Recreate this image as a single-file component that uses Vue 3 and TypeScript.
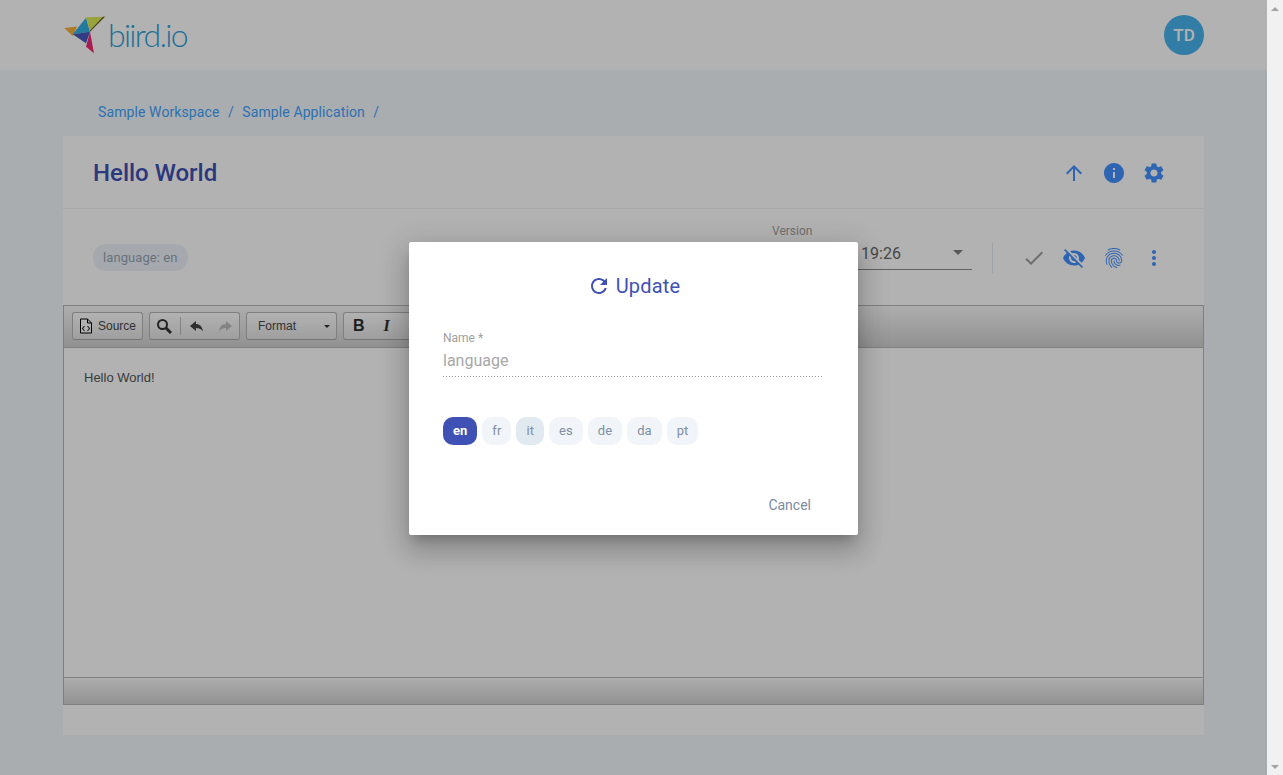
<template>
  <div class="screen">
    <div class="page">
      <header class="topbar">
        <div class="logo">
          <svg class="logo-mark" width="44" height="38" viewBox="0 0 44 38">
            <polygon points="0.3,12 13,10.500 8.700,20" fill="#f7b23b" />
            <polygon points="8.700,18.300 22,1.700 26,15.700" fill="#32b0e4" />
            <polygon points="22,1.300 41,0.700 26,15.700" fill="#dcea56" />
            <polygon points="8.700,18.300 26,15.700 22,27.300" fill="#4756ba" />
            <polygon points="26,15.700 22,30.700 30,37.300" fill="#f02a74" />
            <polygon points="41,0.700 39,0.700 25.500,15 26,15.700" fill="#6d5a3c" />
          </svg>
          <span class="logo-text">biird.io</span>
        </div>
        <div class="avatar">TD</div>
      </header>

      <nav class="crumbs">
        <a>Sample Workspace</a><span>/</span><a>Sample Application</a><span>/</span>
      </nav>

      <section class="card">
        <div class="card-head">
          <h1>Hello World</h1>
          <div class="head-actions">
            <svg viewBox="0 0 24 24"><path d="M4 12l1.41 1.41L11 7.83V20h2V7.83l5.58 5.59L20 12l-8-8-8 8z" /></svg>
            <svg viewBox="0 0 24 24"><path d="M12 2C6.48 2 2 6.48 2 12s4.48 10 10 10 10-4.48 10-10S17.52 2 12 2zm1 15h-2v-6h2v6zm0-8h-2V7h2v2z" /></svg>
            <svg viewBox="0 0 24 24"><path d="M19.14 12.94c.04-.3.06-.61.06-.94 0-.32-.02-.64-.07-.94l2.03-1.58c.18-.14.23-.41.12-.61l-1.92-3.32c-.12-.22-.37-.29-.59-.22l-2.39.96c-.5-.38-1.03-.7-1.62-.94l-.36-2.54c-.04-.24-.24-.41-.48-.41h-3.84c-.24 0-.43.17-.47.41l-.36 2.54c-.59.24-1.13.57-1.62.94l-2.39-.96c-.22-.08-.47 0-.59.22L2.74 8.87c-.12.21-.08.47.12.61l2.03 1.58c-.05.3-.09.63-.09.94s.02.64.07.94l-2.03 1.58c-.18.14-.23.41-.12.61l1.92 3.32c.12.22.37.29.59.22l2.39-.96c.5.38 1.03.7 1.62.94l.36 2.54c.05.24.24.41.48.41h3.84c.24 0 .44-.17.47-.41l.36-2.54c.59-.24 1.13-.56 1.62-.94l2.39.96c.22.08.47 0 .59-.22l1.92-3.32c.12-.22.07-.47-.12-.61l-2.01-1.58zM12 15.6c-1.98 0-3.6-1.62-3.6-3.6s1.62-3.6 3.6-3.6 3.6 1.62 3.6 3.6-1.62 3.6-3.6 3.6z" /></svg>
          </div>
        </div>

        <div class="meta-row">
          <span class="tag">language: en</span>
          <div class="version">
            <label>Version</label>
            <div class="version-select">
              <span>26/08/2019 19:26</span>
              <i class="caret"></i>
            </div>
          </div>
          <div class="meta-actions">
            <svg class="muted" viewBox="0 0 24 24"><path d="M9 16.17L4.83 12l-1.42 1.41L9 19 21 7l-1.41-1.41z" /></svg>
            <svg viewBox="0 0 24 24"><path d="M12 7c2.76 0 5 2.24 5 5 0 .65-.13 1.26-.36 1.83l2.92 2.92c1.51-1.26 2.7-2.89 3.43-4.75-1.73-4.39-6-7.5-11-7.5-1.4 0-2.74.25-3.98.7l2.16 2.16C10.74 7.13 11.35 7 12 7zM2 4.27l2.28 2.28.46.46C3.08 8.3 1.78 10.02 1 12c1.73 4.39 6 7.5 11 7.5 1.55 0 3.03-.3 4.38-.84l.42.42L19.73 22 21 20.73 3.27 3 2 4.27zM7.53 9.8l1.55 1.55c-.05.21-.08.43-.08.65 0 1.66 1.34 3 3 3 .22 0 .44-.03.65-.08l1.55 1.55c-.67.33-1.41.53-2.2.53-2.76 0-5-2.24-5-5 0-.79.2-1.53.53-2.2zm4.31-.78l3.15 3.15.02-.16c0-1.66-1.34-3-3-3l-.17.01z" /></svg>
            <svg viewBox="0 0 24 24"><path d="M17.81 4.47c-.08 0-.16-.02-.23-.06C15.66 3.42 14 3 12.01 3c-1.98 0-3.86.47-5.57 1.41-.24.13-.54.04-.68-.2-.13-.24-.04-.55.2-.68C7.82 2.52 9.86 2 12.01 2c2.13 0 3.99.47 6.03 1.52.25.13.34.43.21.67-.09.18-.26.28-.44.28zM3.5 9.72c-.1 0-.2-.03-.29-.09-.23-.16-.28-.47-.12-.7.99-1.4 2.25-2.5 3.75-3.27C9.98 4.04 14 4.03 17.15 5.65c1.5.77 2.76 1.86 3.75 3.25.16.22.11.54-.12.7-.23.16-.54.11-.7-.12-.9-1.26-2.04-2.25-3.39-2.94-2.87-1.47-6.54-1.47-9.4.01-1.36.7-2.5 1.7-3.4 2.96-.08.14-.23.21-.39.21zm6.25 12.07c-.13 0-.26-.05-.35-.15-.87-.87-1.34-1.43-2.01-2.64-.69-1.23-1.05-2.73-1.05-4.34 0-2.97 2.54-5.39 5.66-5.39s5.66 2.42 5.66 5.39c0 .28-.22.5-.5.5s-.5-.22-.5-.5c0-2.42-2.09-4.39-4.66-4.39-2.57 0-4.66 1.97-4.66 4.39 0 1.44.32 2.77.93 3.85.64 1.15 1.08 1.64 1.85 2.42.19.2.19.51 0 .71-.11.1-.24.15-.37.15zm7.17-1.85c-1.19 0-2.24-.3-3.1-.89-1.49-1.01-2.38-2.65-2.38-4.39 0-.28.22-.5.5-.5s.5.22.5.5c0 1.41.72 2.74 1.94 3.56.71.48 1.54.71 2.54.71.24 0 .64-.03 1.04-.1.27-.05.53.13.58.41.05.27-.13.53-.41.58-.57.11-1.07.12-1.21.12zM14.91 22c-.04 0-.09-.01-.13-.02-1.59-.44-2.63-1.03-3.72-2.1-1.4-1.39-2.17-3.24-2.17-5.22 0-1.62 1.38-2.94 3.08-2.94 1.7 0 3.08 1.32 3.08 2.94 0 1.07.93 1.94 2.08 1.94s2.08-.87 2.08-1.94c0-3.77-3.25-6.83-7.25-6.83-2.84 0-5.44 1.58-6.61 4.03-.39.81-.59 1.76-.59 2.8 0 .78.07 2.01.67 3.61.1.26-.03.55-.29.64-.26.1-.55-.04-.64-.29-.49-1.31-.73-2.61-.73-3.96 0-1.2.23-2.29.68-3.24 1.33-2.79 4.28-4.6 7.51-4.6 4.55 0 8.25 3.51 8.25 7.83 0 1.62-1.38 2.94-3.08 2.94s-3.08-1.32-3.08-2.94c0-1.07-.93-1.94-2.08-1.94s-2.08.87-2.08 1.94c0 1.71.66 3.31 1.87 4.51.95.94 1.86 1.46 3.27 1.85.27.07.42.35.35.61-.05.23-.26.38-.47.38z" /></svg>
            <svg viewBox="0 0 24 24"><path d="M12 8c1.1 0 2-.9 2-2s-.9-2-2-2-2 .9-2 2 .9 2 2 2zm0 2c-1.1 0-2 .9-2 2s.9 2 2 2 2-.9 2-2-.9-2-2-2zm0 6c-1.1 0-2 .9-2 2s.9 2 2 2 2-.9 2-2-.9-2-2-2z" /></svg>
          </div>
        </div>

        <div class="editor">
          <div class="ed-toolbar">
            <div class="ed-group source">
              <svg width="14" height="16" viewBox="0 0 14 16"><path d="M1.500 1h7l4 4v10h-11zM8.500 1v4h4" fill="#fff" stroke="#000" /><path d="M5.500 8L3.500 10.500l2 2.500M8.500 8l2 2.500-2 2.500" fill="none" stroke="#333" stroke-width="1.200" /></svg>
              <span>Source</span>
            </div>
            <div class="ed-group tools">
              <svg width="16" height="16" viewBox="0 0 16 16"><circle cx="6.500" cy="6.500" r="4.500" fill="none" stroke="#333" stroke-width="2" /><path d="M10 10l5 5" stroke="#333" stroke-width="3" /></svg>
              <i class="sep"></i>
              <svg width="16" height="16" viewBox="0 0 16 16"><path d="M7 3L1 8l6 5v-3c3 0 5 .8 7 3.500C13.500 9 11 6 7 6z" fill="#444" /></svg>
              <svg class="off" width="16" height="16" viewBox="0 0 16 16"><path d="M9 3l6 5-6 5v-3c-3 0-5 .8-7 3.500C2.500 9 5 6 9 6z" fill="#444" /></svg>
            </div>
            <div class="ed-group combo">
              <span>Format</span>
              <i class="combo-caret"></i>
            </div>
            <div class="ed-group styles">
              <b>B</b>
              <em>I</em>
            </div>
          </div>
          <div class="ed-body">Hello World!</div>
          <div class="ed-foot"></div>
        </div>
      </section>
    </div>

    <aside class="scrollbar">
      <i class="arrow up"></i>
      <i class="arrow down"></i>
    </aside>

    <div class="backdrop"></div>

    <div class="dialog">
      <h2>
        <svg viewBox="0 0 24 24"><path d="M17.650 6.350C16.200 4.900 14.210 4 12 4c-4.420 0-7.990 3.580-7.990 8s3.570 8 7.990 8c3.730 0 6.840-2.550 7.730-6h-2.080c-.82 2.330-3.040 4-5.650 4-3.310 0-6-2.690-6-6s2.690-6 6-6c1.660 0 3.140.69 4.220 1.780L13 11h7V4l-2.350 2.350z" /></svg>
        Update
      </h2>
      <div class="field">
        <label>Name *</label>
        <div class="field-value">language</div>
      </div>
      <div class="langs">
        <span v-for="l in langs" :key="l" class="lang" :class="{ active: l === 'en', hover: l === 'it' }">{{ l }}</span>
      </div>
      <div class="dialog-foot">
        <button>Cancel</button>
      </div>
    </div>
  </div>
</template>

<script setup lang="ts">
const langs: string[] = ['en', 'fr', 'it', 'es', 'de', 'da', 'pt']
</script>

<style>
html, body {
  margin: 0;
  overflow: hidden;
}
</style>

<style scoped>
.screen {
  display: flex;
  height: 775px;
  overflow: hidden;
  position: relative;
  font-family: Roboto, 'Liberation Sans', sans-serif;
}
.page {
  flex: 1;
  min-width: 0;
  background: #f3f8fb;
}
.scrollbar {
  width: 16px;
  background: #f1f1f1;
  position: relative;
}
.arrow {
  position: absolute;
  left: 4px;
  border-left: 4px solid transparent;
  border-right: 4px solid transparent;
}
.arrow.up {
  top: 7px;
  border-bottom: 4px solid #a3a3a3;
}
.arrow.down {
  bottom: 6px;
  border-top: 4px solid #a3a3a3;
}
.backdrop {
  position: absolute;
  top: 0;
  left: 0;
  width: 1267px;
  height: 100%;
  background: rgba(0, 0, 0, 0.3);
}
.topbar {
  height: 70px;
  background: #fff;
  padding: 0 63px 0 64px;
  display: flex;
  align-items: center;
  justify-content: space-between;
}
.logo {
  display: flex;
  align-items: center;
}
.logo-mark {
  display: block;
}
.logo-text {
  font-family: Lato, sans-serif;
  font-weight: 300;
  font-size: 32px;
  letter-spacing: -1.700px;
  line-height: 38px;
  color: #2f9fd8;
}
.avatar {
  width: 40px;
  height: 40px;
  border-radius: 50%;
  background: #47b3ec;
  color: #fff;
  font-size: 17px;
  font-weight: 500;
  display: flex;
  align-items: center;
  justify-content: center;
}
.crumbs {
  height: 84px;
  margin-bottom: -18px;
  padding: 0 0 0 98px;
  display: flex;
  align-items: center;
  gap: 8.500px;
  font-size: 14px;
  letter-spacing: 0.1px;
  color: #3fa3ff;
}
.card {
  margin: 0 63px;
  height: 599px;
  background: #fff;
}
.card-head {
  height: 73px;
  box-sizing: border-box;
  padding: 1px 38px 0 30px;
  border-bottom: 1px solid #f2f2f2;
  display: flex;
  align-items: center;
  justify-content: space-between;
}
h1 {
  margin: 0;
  font-size: 24px;
  font-weight: 500;
  color: #3f51b5;
}
.head-actions,
.meta-actions {
  display: flex;
  gap: 16px;
}
.head-actions svg,
.meta-actions svg {
  width: 24px;
  height: 24px;
  fill: #4391ff;
  display: block;
}
.meta-actions svg.muted {
  fill: #9e9e9e;
}
.meta-row {
  height: 96px;
  box-sizing: border-box;
  padding: 1px 38px 0 30px;
  display: flex;
  align-items: center;
}
.tag {
  height: 27px;
  line-height: 27px;
  padding: 0 10px;
  border-radius: 13px;
  background: #edf3f8;
  font-size: 13px;
  letter-spacing: 0.08px;
  color: #95a3b5;
}
.version {
  margin-left: auto;
  width: 200px;
  align-self: flex-start;
  margin-top: 14px;
}
.version label {
  display: block;
  font-size: 12px;
  color: #a0a0a0;
  line-height: 14px;
  margin-bottom: 6px;
}
.version-select {
  display: flex;
  align-items: center;
  justify-content: space-between;
  box-sizing: border-box;
  height: 26px;
  padding: 0 9px 6px 0;
  border-bottom: 1px solid #8c8c8c;
  font-size: 16px;
  color: #666;
}
.caret {
  border-left: 5px solid transparent;
  border-right: 5px solid transparent;
  border-top: 5px solid #808080;
  margin-top: -2px;
}
.meta-actions {
  border-left: 1px solid #e0e8ee;
  margin-left: 20px;
  padding-left: 29px;
  height: 30px;
  align-items: center;
  margin-top: 1px;
}
.editor {
  height: 400px;
  box-sizing: border-box;
  border: 1px solid #b6b6b6;
  display: flex;
  flex-direction: column;
}
.ed-toolbar {
  height: 42px;
  box-sizing: border-box;
  background: linear-gradient(#f8f8f8, #cfd1cf);
  border-bottom: 1px solid #b6b6b6;
  padding: 6px 8px;
  display: flex;
  gap: 6px;
}
.ed-group {
  height: 28px;
  box-sizing: border-box;
  border: 1px solid #b6b6b6;
  border-bottom-color: #a6a6a6;
  border-radius: 3px;
  background: linear-gradient(#fff, #e4e4e4);
  display: flex;
  align-items: center;
  font-family: 'Liberation Sans', Arial, sans-serif;
  font-size: 12px;
  color: #474747;
}
.source {
  padding: 0 6px;
  gap: 5px;
}
.tools {
  width: 91px;
  padding: 0 6px;
}
.sep {
  width: 1px;
  height: 18px;
  margin: 0 8px 0 8px;
  background: #bcbcbc;
}
.off {
  opacity: 0.3;
  margin-left: 12px;
}
.combo {
  width: 91px;
  padding: 0 6px 0 11px;
  justify-content: space-between;
}
.combo-caret {
  border-left: 3px solid transparent;
  border-right: 3px solid transparent;
  border-top: 3px solid #333;
}
.styles {
  width: 110px;
  padding: 0 9px;
  gap: 19px;
  font-size: 16px;
  color: #2c2c2c;
}
.styles b {
  font-family: 'Liberation Sans', Arial, sans-serif;
  font-weight: 700;
}
.styles em {
  font-family: 'Liberation Serif', serif;
  font-weight: 700;
}
.ed-body {
  flex: 1;
  padding: 22px 20px;
  font-family: 'Liberation Sans', Arial, sans-serif;
  font-size: 13px;
  line-height: 16px;
  color: #555;
}
.ed-foot {
  height: 27px;
  box-sizing: border-box;
  border-top: 1px solid #b6b6b6;
  box-shadow: inset 0 1px 0 #fff;
  background: linear-gradient(#f8f8f8, #cfd1cf);
}
.dialog {
  position: absolute;
  left: 409px;
  top: 242px;
  width: 449px;
  height: 293px;
  box-sizing: border-box;
  padding: 28px 34px 0;
  background: #fff;
  border-radius: 2px;
  box-shadow: 0 8px 10px -5px rgba(0, 0, 0, 0.2), 0 16px 24px 2px rgba(0, 0, 0, 0.14), 0 6px 30px 5px rgba(0, 0, 0, 0.12);
  display: flex;
  flex-direction: column;
}
h2 {
  margin: 0;
  font-size: 20px;
  font-weight: 400;
  line-height: 32px;
  color: #3f51b5;
  letter-spacing: 0.2px;
  display: flex;
  justify-content: center;
  align-items: center;
  gap: 5px;
}
h2 svg {
  fill: #3f51b5;
  width: 24px;
  height: 24px;
}
.field {
  margin-top: 29px;
  width: 381px;
  height: 46px;
  background-image: linear-gradient(to right, rgba(0, 0, 0, 0.42) 33%, transparent 0%);
  background-size: 3px 1px;
  background-position: left bottom;
  background-repeat: repeat-x;
}
.field label {
  display: block;
  font-size: 12px;
  line-height: 14px;
  color: #a0a0a0;
}
.field-value {
  font-size: 16px;
  line-height: 19px;
  margin-top: 6px;
  color: #a8a8a8;
}
.langs {
  display: flex;
  gap: 5px;
  margin-top: 40px;
}
.lang {
  height: 28px;
  line-height: 28px;
  padding: 0 10px;
  border-radius: 10px;
  background: #f1f5f9;
  color: #7f8ea3;
  font-size: 13px;
  letter-spacing: 0.08px;
}
.lang.hover {
  background: #e1e9f1;
}
.lang.active {
  background: #3f51b5;
  color: #fff;
  font-weight: 700;
  letter-spacing: 0;
}
.dialog-foot {
  margin-top: auto;
  padding: 0 13px 20px 0;
  display: flex;
  justify-content: flex-end;
}
.dialog-foot button {
  border: none;
  background: none;
  padding: 0;
  font-family: inherit;
  font-size: 14px;
  line-height: 20px;
  color: #7a8ba5;
}
</style>
